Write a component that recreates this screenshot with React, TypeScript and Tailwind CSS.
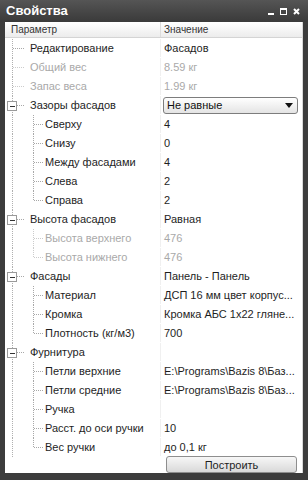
import React from 'react'

type Row = {
  label: string
  value?: string
  level: 1 | 2
  expand?: boolean
  last?: boolean
  disabled?: boolean
  dropdown?: boolean
}

const rows: Row[] = [
  { label: 'Редактирование', value: 'Фасадов', level: 1 },
  { label: 'Общий вес', value: '8.59 кг', level: 1, disabled: true },
  { label: 'Запас веса', value: '1.99 кг', level: 1, disabled: true },
  { label: 'Зазоры фасадов', value: 'Не равные', level: 1, expand: true, dropdown: true },
  { label: 'Сверху', value: '4', level: 2 },
  { label: 'Снизу', value: '0', level: 2 },
  { label: 'Между фасадами', value: '4', level: 2 },
  { label: 'Слева', value: '2', level: 2 },
  { label: 'Справа', value: '2', level: 2, last: true },
  { label: 'Высота фасадов', value: 'Равная', level: 1, expand: true },
  { label: 'Высота верхнего', value: '476', level: 2, disabled: true },
  { label: 'Высота нижнего', value: '476', level: 2, disabled: true, last: true },
  { label: 'Фасады', value: 'Панель - Панель', level: 1, expand: true },
  { label: 'Материал', value: 'ДСП 16 мм цвет корпус...', level: 2 },
  { label: 'Кромка', value: 'Кромка АБС 1x22 глянe...', level: 2 },
  { label: 'Плотность (кг/м3)', value: '700', level: 2, last: true },
  { label: 'Фурнитура', value: '', level: 1, expand: true },
  { label: 'Петли верхние', value: 'E:\\Programs\\Bazis 8\\Баз...', level: 2 },
  { label: 'Петли средние', value: 'E:\\Programs\\Bazis 8\\Баз...', level: 2 },
  { label: 'Ручка', value: '', level: 2 },
  { label: 'Расст. до оси ручки', value: '10', level: 2 },
  { label: 'Вес ручки', value: 'до 0,1 кг', level: 2, last: true },
]

function TreeGutter({ row }: { row: Row }) {
  const w = row.level === 1 ? 25 : 40
  const c = row.disabled ? '#cccccc' : '#a8a8a8'
  return (
    <svg width={w} height={19} className="shrink-0" shapeRendering="crispEdges">
      <line x1={7.5} y1={0} x2={7.5} y2={19} stroke="#b0b0b0" strokeDasharray="1 1" />
      {row.level === 1 && !row.expand && (
        <line x1={8} y1={9.5} x2={19} y2={9.5} stroke={c} strokeDasharray="1 1" />
      )}
      {row.level === 1 && row.expand && (
        <g>
          <line x1={12} y1={9.5} x2={19} y2={9.5} stroke={c} strokeDasharray="1 1" />
          <rect x={2.5} y={5.5} width={9} height={9} fill="#fff" stroke="#9a9a9a" />
          <line x1={5} y1={10.5} x2={10} y2={10.5} stroke="#333" />
        </g>
      )}
      {row.level === 2 && (
        <g>
          <line x1={28.5} y1={0} x2={28.5} y2={row.last ? 10 : 19} stroke={c} strokeDasharray="1 1" />
          <line x1={29} y1={9.5} x2={38} y2={9.5} stroke={c} strokeDasharray="1 1" />
        </g>
      )}
    </svg>
  )
}

function Dropdown({ text }: { text: string }) {
  return (
    <div className="ml-[2px] mr-[4px] flex h-[17px] flex-1 items-center justify-between rounded-[3px] border border-[#7d7d7d] bg-gradient-to-b from-[#ffffff] to-[#e4e4e4] pl-[3px] pr-[4px]">
      <span className="text-[#111]">{text}</span>
      <svg width="8" height="5" viewBox="0 0 8 5">
        <path d="M0 0 H8 L4 5 Z" fill="#111" />
      </svg>
    </div>
  )
}

export default function App() {
  return (
    <div
      className="flex h-[480px] w-[308px] flex-col bg-[#3c3c3c] text-[11px]"
      style={{ fontFamily: '"Liberation Sans", Arial, sans-serif' }}
    >
      {/* title bar */}
      <div className="flex h-[22px] items-center justify-between bg-gradient-to-b from-[#555555] to-[#3a3a3a] pl-[6px] pr-[8px]">
        <span className="text-[13px] font-bold text-white">Свойства</span>
        <div className="flex items-center gap-[6px] pt-[1px]">
          <svg width="6" height="7" viewBox="0 0 6 7">
            <rect x="0" y="5" width="6" height="2" fill="#fff" />
          </svg>
          <svg width="7" height="7" viewBox="0 0 7 7">
            <rect x="0.5" y="0.5" width="6" height="6" fill="none" stroke="#fff" />
            <rect x="0" y="0" width="7" height="2" fill="#fff" />
          </svg>
          <svg width="7" height="7" viewBox="0 0 7 7">
            <path d="M1 1 L6 6 M6 1 L1 6" stroke="#fff" strokeWidth="2" />
          </svg>
        </div>
      </div>

      {/* body */}
      <div className="mx-[5px] mb-[7px] flex flex-1 flex-col border-r border-[#d8d8d8] bg-white text-[#1e1e1e]">
        {/* header */}
        <div className="flex h-[16px] items-center border-b border-[#d4d4d4] bg-gradient-to-b from-[#ffffff] to-[#ececec] text-[10px] text-[#333]">
          <div className="flex h-full w-[156px] items-center border-r border-[#dcdcdc] pl-[6px]">Параметр</div>
          <div className="pl-[3px]">Значение</div>
        </div>

        {rows.map((r, i) => (
          <div key={i} className="flex h-[19px] items-center pt-[1px]">
            <div className="flex h-full w-[156px] shrink-0 items-center border-r border-[#f0f0f0]">
              <TreeGutter row={r} />
              <span className={r.disabled ? 'text-[#a9a9a9]' : ''}>{r.label}</span>
            </div>
            {r.dropdown ? (
              <Dropdown text={r.value || ''} />
            ) : (
              <div className={'min-w-0 flex-1 truncate pl-[3px] ' + (r.disabled ? 'text-[#a9a9a9]' : '')}>
                {r.value}
              </div>
            )}
          </div>
        ))}

        {/* button */}
        <div className="flex h-[17px] justify-end pr-[5px]">
          <button className="h-[17px] w-[131px] rounded-[3px] border border-[#8e8e8e] bg-gradient-to-b from-[#f7f7f7] to-[#d9d9d9] text-[11px] text-[#1e1e1e]">
            Построить
          </button>
        </div>
      </div>
    </div>
  )
}
